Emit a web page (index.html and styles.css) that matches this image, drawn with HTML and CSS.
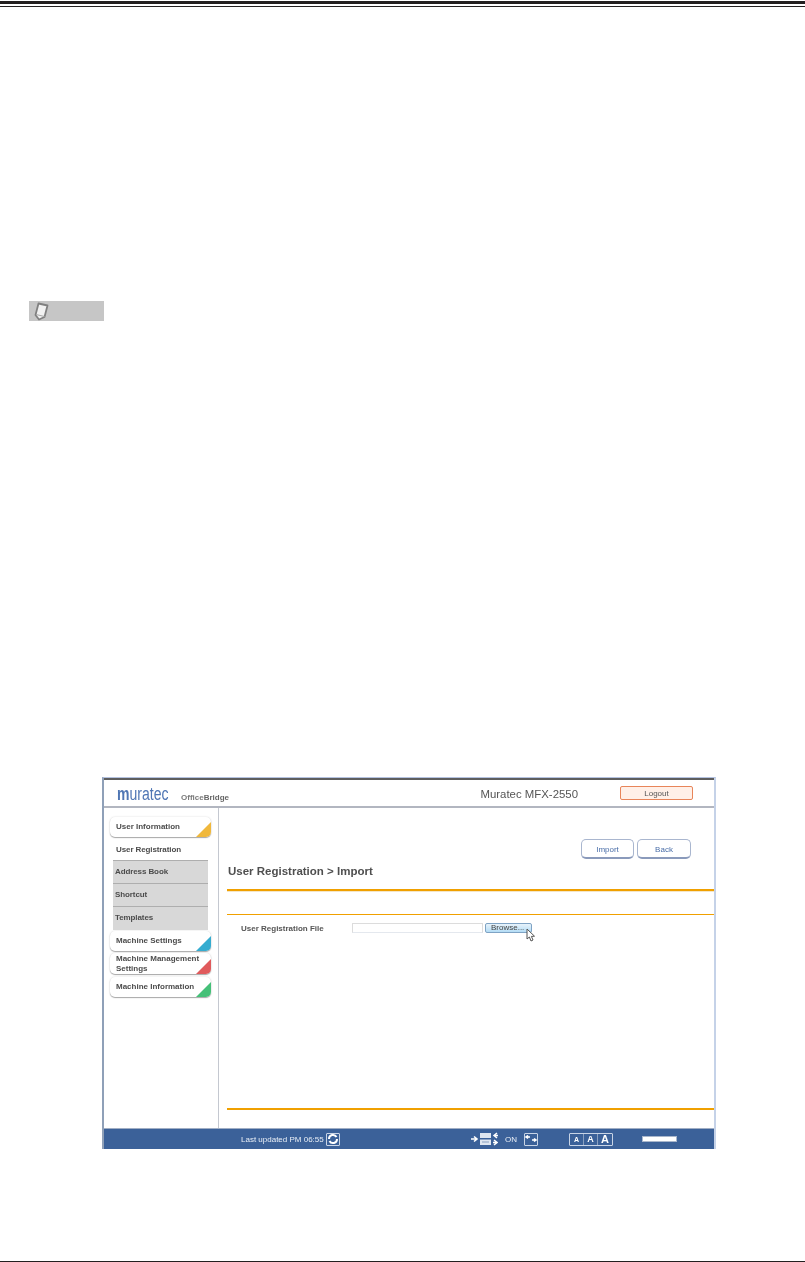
FILE: index.html
```html
<!DOCTYPE html>
<html lang="en">
<head>
<meta charset="utf-8">
<title>User Registration Import</title>
<link rel="stylesheet" href="styles.css">
</head>
<body>
<div class="rule-top"></div>
<div class="note">
  <svg class="note-icon" width="15" height="19" viewBox="0 0 15 19"><path d="M4.5 1.5 L13.5 3.5 L10.5 15 L5 17.5 L1.5 13 Z" fill="#f2f2f2" stroke="#808080" stroke-width="1.8" stroke-linejoin="round"/><path d="M2 12.5 L10.5 14.5" stroke="#a8a8a8" stroke-width="1"/></svg>
</div>
<div class="frame">
  <header class="top">
    <div class="brand">
      <span class="logo"><b>m</b>uratec</span>
      <span class="product">Office<b>Bridge</b></span>
    </div>
    <div class="top-right">
      <span class="model">Muratec MFX-2550</span>
      <span class="logout">Logout</span>
    </div>
  </header>
  <div class="main">
    <nav class="side">
      <div class="tab tab-yellow">User Information</div>
      <div class="subs">
        <div class="sub sub-on">User Registration</div>
        <div class="sub">Address Book</div>
        <div class="sub">Shortcut</div>
        <div class="sub">Templates</div>
      </div>
      <div class="tab tab-blue">Machine Settings</div>
      <div class="tab tab-red tab-two">Machine Management Settings</div>
      <div class="tab tab-green tab-last">Machine Information</div>
    </nav>
    <section class="content">
      <div class="actions">
        <span class="btn btn-import">Import</span>
        <span class="btn btn-back">Back</span>
      </div>
      <h1 class="title">User Registration &gt; Import</h1>
      <div class="line-thick"></div>
      <div class="line-thin"></div>
      <div class="field">
        <span class="label">User Registration File</span>
        <span class="input"></span>
        <span class="browse">Browse...
          <svg class="cursor" width="10" height="14" viewBox="0 0 10 14"><path d="M1 1 L1 11 L3.4 9 L5 13 L7 12 L5.4 8.4 L8.5 8.2 Z" fill="#fff" stroke="#555" stroke-width="1"/></svg>
        </span>
      </div>
      <div class="grow"></div>
      <div class="line-bottom"></div>
    </section>
  </div>
  <footer class="bar">
    <span class="updated">Last updated PM 06:55</span>
    <span class="icon-box refresh">
      <svg width="12" height="12" viewBox="0 0 12 12"><path d="M2 6 A4 4 0 0 1 9.5 4" fill="none" stroke="#fff" stroke-width="2"/><path d="M10 6 A4 4 0 0 1 2.5 8" fill="none" stroke="#fff" stroke-width="2"/></svg>
    </span>
    <svg class="machine" width="27" height="14" viewBox="0 0 27 14"><path d="M0 7 H5 M3 4.5 L6 7 L3 9.5" fill="none" stroke="#fff" stroke-width="1.6"/><rect x="9" y="1" width="11" height="12" fill="#dfe6f0"/><rect x="9" y="6" width="11" height="1.5" fill="#3b6199"/><rect x="11" y="9.5" width="7" height="1" fill="#8aa0c0"/><path d="M26 1 L23 3.5 L26 6 M23 3.5 H27 M23 8 L26 10.5 L23 13 M26 10.5 H22" fill="none" stroke="#fff" stroke-width="1.5"/></svg>
    <span class="on">ON</span>
    <span class="icon-box arrows">
      <svg width="12" height="8" viewBox="0 0 12 8"><path d="M5 2 H1 M3 0.5 L1 2 L3 3.5 M7 5 H11 M9 3.5 L11 5 L9 6.5" fill="none" stroke="#fff" stroke-width="1.5"/></svg>
    </span>
    <span class="sizes">
      <span class="size size-s">A</span><span class="size size-m">A</span><span class="size size-l">A</span>
    </span>
    <span class="progress"></span>
  </footer>
</div>
<div class="rule-bottom"></div>
</body>
</html>
```
FILE: styles.css
```css
* { box-sizing: border-box; }
html, body { margin: 0; padding: 0; background: #fff; }
body {
  width: 805px;
  height: 1262px;
  display: flex;
  flex-direction: column;
  font-family: "Liberation Sans", Arial, sans-serif;
  color: #4a4a4a;
  overflow: hidden;
}
.rule-top {
  height: 6px;
  margin-top: 1px;
  border-top: 3px solid #231f20;
  border-bottom: 1px solid #231f20;
}
.note {
  width: 75px;
  height: 20px;
  margin: 294px 0 0 29px;
  background: #c6c6c6;
  display: flex;
  align-items: center;
  padding-left: 5px;
}
.frame {
  width: 614px;
  height: 372px;
  margin: 456px 0 0 102px;
  display: flex;
  flex-direction: column;
  border-left: 2px solid #8fa0b8;
  border-right: 2px solid #c5d2e8;
  border-top: 1px solid #b4c2e0;
  background: #fff;
  filter: blur(0.35px);
}
.top {
  height: 30px;
  flex: none;
  border-top: 2px solid #5e5e5e;
  border-bottom: 2px solid #b2b6c0;
  display: flex;
  justify-content: space-between;
  padding: 0 21px 0 13px;
}
.brand { display: flex; align-items: flex-end; }
.logo {
  width: 53px;
  margin-bottom: 1px;
  font-size: 18px;
  line-height: 22px;
  color: #4f76b4;
  white-space: nowrap;
  transform: scaleX(0.78);
  transform-origin: left bottom;
}
.logo b { font-weight: 700; }
.product {
  font-size: 8px;
  line-height: 12px;
  margin-left: 11px;
  margin-bottom: 2px;
  color: #7a7a7a;
  font-weight: 700;
}
.product b { color: #666; }
.top-right { display: flex; align-items: center; }
.model { font-size: 11.4px; color: #555; margin-top: 1px; }
.logout {
  width: 73px;
  height: 14px;
  margin-left: 42px;
  margin-top: -1px;
  background: #fff0e8;
  border: 1px solid #e8855a;
  border-radius: 2px;
  font-size: 8px;
  line-height: 13px;
  text-align: center;
  color: #555;
}
.main { flex: 1; display: flex; min-height: 0; }
.side {
  width: 115px;
  flex: none;
  border-right: 1px solid #c4c8d0;
  padding: 9px 6px 0 6px;
  font-size: 8px;
  font-weight: 700;
  color: #4c4c4c;
}
.tab {
  position: relative;
  width: 101px;
  height: 20px;
  padding-left: 6px;
  line-height: 19px;
  background: #fff;
  border-radius: 5px;
  overflow: hidden;
  box-shadow: 0 1px 1px 0 #a8a8a8, 0 0 2px #d8d8d8;
}
.tab::after {
  content: "";
  position: absolute;
  right: 0;
  bottom: 0;
  width: 15px;
  height: 15px;
  clip-path: polygon(100% 0, 100% 100%, 0 100%);
}
.tab-yellow::after { background: #f0b83c; }
.tab-blue::after { background: #35acd0; }
.tab-red::after { background: #e05a5c; }
.tab-green::after { background: #45c078; }
.tab-two {
  margin-top: 2px;
  height: 21px;
  line-height: 10px;
  padding-top: 1px;
  padding-right: 4px;
}
.tab-last { margin-top: 3px; }
.subs { width: 95px; margin: 2px 0 1px 3px; }
.sub {
  height: 23px;
  padding-left: 2px;
  line-height: 21px;
  letter-spacing: -0.1px;
  background: #d8d8d8;
  border-bottom: 1px solid #aeaeae;
}
.sub:last-child { border-bottom: 0; }
.sub-on { height: 22px; padding-left: 3px; background: #fff; }
.content {
  flex: 1;
  display: flex;
  flex-direction: column;
  padding: 31px 0 18px 8px;
  min-width: 0;
}
.actions { display: flex; justify-content: flex-end; gap: 3px; padding-right: 23px; }
.btn {
  height: 20px;
  background: #fff;
  border: 1px solid #a9b6cf;
  border-bottom: 2px solid #8a9abb;
  border-radius: 5px;
  font-size: 8px;
  line-height: 19px;
  text-align: center;
  color: #4a6ea8;
}
.btn-import { width: 53px; }
.btn-back { width: 54px; }
.title {
  margin: 5px 0 0;
  padding-left: 1px;
  font-size: 11.5px;
  line-height: 14px;
  font-weight: 700;
  color: #4f4f4f;
}
.line-thick {
  height: 2px;
  margin-top: 11px;
  background: #f0a000;
  box-shadow: 0 1px 0 #f4e6c8;
}
.line-thin { height: 1px; margin-top: 23px; background: #f0a000; }
.field { display: flex; align-items: center; height: 10px; margin-top: 8px; }
.label {
  width: 111px;
  margin-left: 14px;
  font-size: 8px;
  font-weight: 700;
  color: #555;
}
.input { width: 131px; height: 10px; border: 1px solid #dcdcdc; border-bottom-color: #e4e8ee; }
.browse {
  position: relative;
  width: 47px;
  height: 10px;
  margin-left: 2px;
  background: linear-gradient(#e8f3fb, #b4dcf5);
  border: 1px solid #7fa3c4;
  border-radius: 2px;
  font-size: 8px;
  line-height: 8px;
  padding-left: 5px;
  color: #444;
}
.cursor { position: absolute; left: 40px; top: 4px; }
.grow { flex: 1; }
.line-bottom { height: 2px; background: #f0a000; }
.bar {
  height: 21px;
  flex: none;
  background: #3b6199;
  border-top: 1px solid #a0aec4;
  display: flex;
  align-items: center;
  padding-left: 137px;
  color: #e8eef6;
  font-size: 8px;
}
.updated { width: 85px; }
.icon-box {
  display: flex;
  align-items: center;
  justify-content: center;
  width: 14px;
  height: 13px;
  border: 1px solid #c8d4e6;
  border-radius: 1px;
}
.machine { margin-left: 131px; }
.on { margin-left: 7px; width: 19px; }
.sizes {
  display: flex;
  margin-left: 31px;
  height: 13px;
  border: 1px solid #c8d4e6;
  border-radius: 1px;
}
.size {
  width: 14px;
  text-align: center;
  font-weight: 700;
  color: #fff;
  line-height: 11px;
  border-right: 1px solid #8aa0c0;
}
.size:last-child { border-right: 0; }
.size-s { font-size: 7px; line-height: 12px; }
.size-m { font-size: 9px; }
.size-l { font-size: 11px; }
.progress {
  width: 35px;
  height: 6px;
  margin-left: 29px;
  background: #fff;
  border: 1px solid #a8b6cc;
}
.rule-bottom { height: 1px; margin-top: 112px; background: #231f20; }
```
